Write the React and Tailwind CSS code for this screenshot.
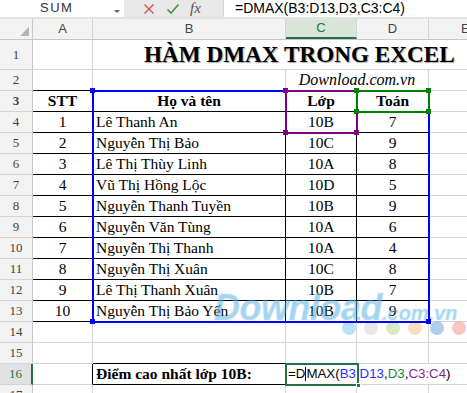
import React from 'react';

const students = [
  [1, 'Lê Thanh An', '10B', 7],
  [2, 'Nguyễn Thị Bảo', '10C', 9],
  [3, 'Lê Thị Thùy Linh', '10A', 8],
  [4, 'Vũ Thị Hồng Lộc', '10D', 5],
  [5, 'Nguyễn Thanh Tuyền', '10B', 9],
  [6, 'Nguyễn Văn Tùng', '10A', 6],
  [7, 'Nguyễn Thị Thanh', '10A', 4],
  [8, 'Nguyễn Thị Xuân', '10C', 8],
  [9, 'Lê Thị Thanh Xuân', '10B', 7],
  [10, 'Nguyễn Thị Bảo Yến', '10B', 9],
];

const serif = { fontFamily: '"Liberation Serif", "Times New Roman", serif' };

const RowNum = ({ n, active = false, h = 'h-[21px]' }) => (
  <div
    className={`w-[33px] shrink-0 ${h} flex items-center justify-center border-b border-[#d4d4d4] text-[13px] ${
      active
        ? 'bg-[#e1e1e1] text-[#217346] border-r-2 border-r-[#217346]'
        : 'bg-[#f3f3f3] text-[#444] border-r border-r-[#c8c8c8]'
    }`}
  >
    {n}
  </div>
);

const Square = ({ x, y, color }) => (
  <div className={`absolute w-[5px] h-[5px] ${color}`} style={{ left: x - 3, top: y - 3 }} />
);

export default function App() {
  return (
    <div
      className="relative w-[467px] h-[393px] overflow-hidden bg-white"
      style={{ fontFamily: '"Liberation Sans", Arial, sans-serif' }}
    >
      {/* formula bar */}
      <div className="flex h-[17px] overflow-hidden">
        <div className="relative w-[124px] shrink-0 bg-white">
          <span className="absolute left-[40px] top-[1px] text-[13px] leading-[14px] tracking-[1.5px] text-[#333]">SUM</span>
          <span className="absolute left-[114px] top-[10px] w-0 h-0 border-l-[3px] border-r-[3px] border-t-[3px] border-l-transparent border-r-transparent border-t-[#666]" />
        </div>
        <div className="w-[99px] shrink-0 bg-[#e8e8e8] flex items-center">
          <svg width="12" height="12" viewBox="0 0 12 12" className="ml-[19px]">
            <path d="M1.5 1.5L10.5 10.5M10.5 1.5L1.5 10.5" stroke="#d9534f" strokeWidth="1.4" />
          </svg>
          <svg width="14" height="12" viewBox="0 0 14 12" className="ml-[11px]">
            <path d="M1.5 6.5L5 10L12.5 1.5" stroke="#3a9a3a" strokeWidth="1.6" fill="none" />
          </svg>
          <span className="ml-[10px] italic text-[15px] leading-none text-[#555]" style={serif}>fx</span>
        </div>
        <div className="flex-1 bg-white border-l border-[#d4d4d4] pl-[11px]">
          <span className="block text-[14px] leading-[14px] pt-[1px] text-black">=DMAX(B3:D13,D3,C3:C4)</span>
        </div>
      </div>
      <div className="h-[2px] bg-[#e3e3e3]" />

      {/* column headers */}
      <div className="flex h-[21px] bg-[#f3f3f3] border-b border-[#c8c8c8] text-[13px] text-[#444]">
        <div className="relative w-[33px] shrink-0 border-r border-[#c8c8c8]">
          <span className="absolute right-[3px] bottom-[3px] w-0 h-0" style={{ borderBottom: '9px solid #b4b4b4', borderLeft: '9px solid transparent' }} />
        </div>
        <div className="w-[60px] shrink-0 border-r border-[#d4d4d4] flex items-center justify-center">A</div>
        <div className="w-[193px] shrink-0 border-r border-[#d4d4d4] flex items-center justify-center">B</div>
        <div className="w-[71px] shrink-0 border-r border-[#d4d4d4] border-b-2 border-b-[#217346] bg-[#d7e6d7] text-[#217346] flex items-center justify-center">C</div>
        <div className="w-[72px] shrink-0 border-r border-[#d4d4d4] flex items-center justify-center">D</div>
        <div className="flex-1 flex items-center pl-[32px]">E</div>
      </div>

      <div style={serif} className="text-[15.5px] text-black">
        {/* row 1 */}
        <div className="flex">
          <RowNum n={1} h="h-[30px]" />
          <div className="w-[60px] shrink-0 h-[30px] border-r border-b border-[#d4d4d4]" />
          <div className="flex-1 h-[30px] border-b border-[#d4d4d4] flex items-end pb-[2px] pl-[51px]">
            <span className="text-[23.2px] font-bold leading-[26px] whitespace-nowrap [text-shadow:1px_1px_1px_rgba(0,0,0,0.35)]">
              HÀM DMAX TRONG EXCEL
            </span>
          </div>
        </div>

        {/* row 2 */}
        <div className="flex h-[21px]">
          <RowNum n={2} />
          <div className="w-[60px] shrink-0 border-r border-r-[#d4d4d4] border-b border-b-black" />
          <div className="w-[193px] shrink-0 border-r border-r-[#d4d4d4] border-b border-b-black" />
          <div className="w-[143px] shrink-0 border-r border-r-[#d4d4d4] border-b border-b-black flex items-center justify-center italic text-[16px]">
            Download.com.vn
          </div>
          <div className="flex-1 border-b border-[#d4d4d4]" />
        </div>

        {/* row 3 header */}
        <div className="flex h-[21px] font-bold">
          <RowNum n={3} />
          <div className="w-[60px] shrink-0 border-r border-b border-black flex items-center justify-center">STT</div>
          <div className="w-[193px] shrink-0 border-r border-b border-black flex items-center justify-center">Họ và tên</div>
          <div className="w-[71px] shrink-0 border-r border-b border-black flex items-center justify-center">Lớp</div>
          <div className="w-[72px] shrink-0 border-r border-b border-black flex items-center justify-center">Toán</div>
          <div className="flex-1 border-b border-[#d4d4d4]" />
        </div>

        {students.map(([stt, name, lop, toan], i) => (
          <div key={stt} className="flex h-[21px]">
            <RowNum n={i + 4} />
            <div className="w-[60px] shrink-0 border-r border-b border-black flex items-center justify-center">{stt}</div>
            <div className="w-[193px] shrink-0 border-r border-b border-black flex items-center pl-[3px] whitespace-nowrap">{name}</div>
            <div className="w-[71px] shrink-0 border-r border-b border-black flex items-center justify-center">{lop}</div>
            <div className="w-[72px] shrink-0 border-r border-b border-black flex items-center justify-center">{toan}</div>
            <div className="flex-1 border-b border-[#d4d4d4]" />
          </div>
        ))}

        {/* rows 14, 15 */}
        {[14, 15].map((n) => (
          <div key={n} className="flex h-[21px]">
            <RowNum n={n} />
            <div className="w-[60px] shrink-0 border-r border-b border-[#d4d4d4]" />
            <div className={`w-[193px] shrink-0 border-r border-r-[#d4d4d4] border-b ${n === 15 ? 'border-b-black' : 'border-b-[#d4d4d4]'}`} />
            <div className="w-[71px] shrink-0 border-r border-b border-[#d4d4d4]" />
            <div className="w-[72px] shrink-0 border-r border-b border-[#d4d4d4]" />
            <div className="flex-1 border-b border-[#d4d4d4]" />
          </div>
        ))}

        {/* row 16 */}
        <div className="flex h-[21px]">
          <RowNum n={16} active />
          <div className="w-[60px] shrink-0 border-r border-r-black border-b border-b-[#d4d4d4]" />
          <div className="w-[193px] shrink-0 border-r border-b border-black flex items-center pl-[3px] font-bold whitespace-nowrap">
            Điểm cao nhất lớp 10B:
          </div>
          <div
            className="flex-1 border-b border-[#d4d4d4] flex items-center pl-[2px] text-[13.3px] whitespace-nowrap"
            style={{ fontFamily: '"Liberation Sans", Arial, sans-serif' }}
          >
            <span>=D</span>
            <span className="inline-block w-px h-[14px] bg-black" />
            <span>MAX(</span>
            <span className="text-[#2b2bff]">B3:D13</span>
            <span>,</span>
            <span className="text-[#168a3c]">D3</span>
            <span>,</span>
            <span className="text-[#8a1f9a]">C3:C4</span>
            <span>)</span>
          </div>
        </div>

        {/* row 17 */}
        <div className="flex h-[21px]">
          <RowNum n={17} />
          <div className="w-[60px] shrink-0 border-r border-[#d4d4d4]" />
          <div className="w-[193px] shrink-0 border-r border-[#d4d4d4]" />
          <div className="w-[71px] shrink-0 border-r border-[#d4d4d4]" />
          <div className="w-[72px] shrink-0 border-r border-[#d4d4d4]" />
          <div className="flex-1" />
        </div>
      </div>

      {/* watermark */}
      <div className="absolute left-[214px] top-[281px] flex items-baseline pointer-events-none whitespace-nowrap text-[#5aaee2]/35 font-bold italic [text-shadow:0_0_2px_rgba(90,174,226,0.3)]">
        <span className="text-[36px] tracking-[-0.5px]">Download</span>
        <span className="text-[20px]">.com.vn</span>
      </div>
      <div className="absolute left-[342px] top-[321px] flex gap-[8px] pointer-events-none">
        <span className="w-[14px] h-[14px] rounded-full bg-[#9ad6f2]/70" />
        <span className="w-[14px] h-[14px] rounded-full bg-[#dedede]/70" />
        <span className="w-[14px] h-[14px] rounded-full bg-[#c4e3a6]/70" />
        <span className="w-[14px] h-[14px] rounded-full bg-[#f7d0a0]/70" />
        <span className="w-[14px] h-[14px] rounded-full bg-[#8fbbe6]/70" />
        <span className="w-[14px] h-[14px] rounded-full bg-[#f6aeae]/70" />
      </div>

      {/* reference highlights */}
      <div className="absolute left-[92px] top-[90px] w-[338px] h-[233px] border-2 border-[#0000ff] pointer-events-none" />
      <div className="absolute left-[285px] top-[90px] w-[73px] h-[44px] border-2 border-[#800080] pointer-events-none" />
      <div className="absolute left-[356px] top-[90px] w-[74px] h-[23px] border-2 border-[#008000] pointer-events-none" />
      <Square x={93} y={91} color="bg-[#0000ff]" />
      <Square x={93} y={322} color="bg-[#0000ff]" />
      <Square x={429} y={322} color="bg-[#0000ff]" />
      <Square x={286} y={91} color="bg-[#800080]" />
      <Square x={286} y={133} color="bg-[#800080]" />
      <Square x={357} y={133} color="bg-[#800080]" />
      <Square x={357} y={91} color="bg-[#008000]" />
      <Square x={429} y={91} color="bg-[#008000]" />
      <Square x={357} y={112} color="bg-[#008000]" />
      <Square x={429} y={112} color="bg-[#008000]" />

      {/* active cell C16 */}
      <div className="absolute left-[285px] top-[363px] w-[74px] h-[23px] border-2 border-[#217346] pointer-events-none" />
      <div className="absolute left-[356px] top-[383px] w-[5px] h-[5px] bg-[#217346] border border-white" />
    </div>
  );
}
